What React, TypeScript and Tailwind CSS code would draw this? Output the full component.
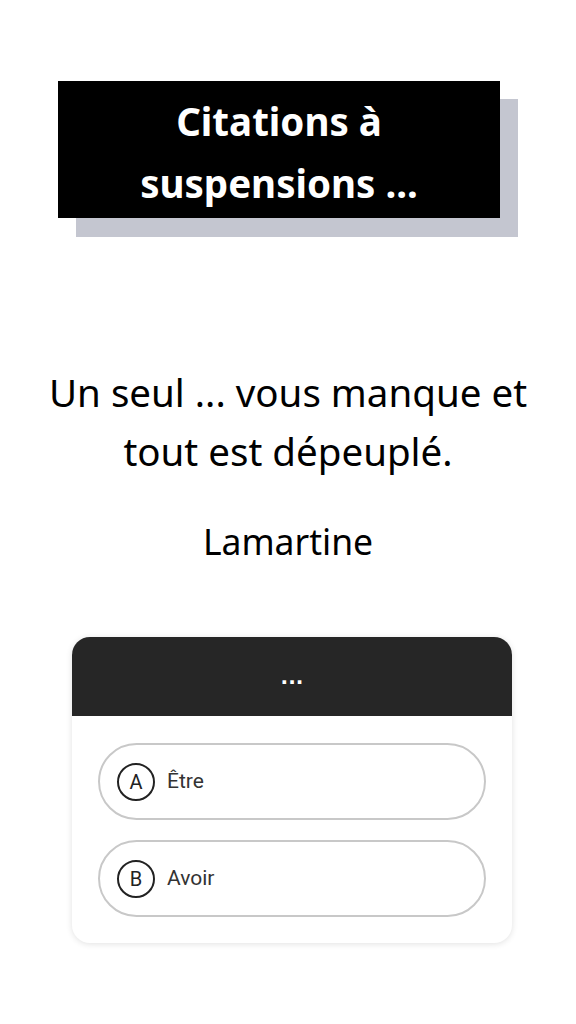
export default function App() {
  const options = [
    { letter: "A", label: "Être" },
    { letter: "B", label: "Avoir" },
  ];

  return (
    <div className="min-h-[1024px] w-[576px] bg-white">
      {/* Title */}
      <div className="pl-[58px] pt-[81px]">
        <div className="relative h-[137px] w-[442px]">
          <div className="absolute left-[18px] top-[18px] h-[138px] w-[442px] bg-[#c4c6d0]" />
          <div className="relative flex h-full w-full items-center justify-center bg-black pt-[4px]">
            <h1
              className="text-center text-[38.5px] font-bold leading-[62px] text-white"
              style={{ fontFamily: '"Noto Sans", sans-serif' }}
            >
              Citations à
              <br />
              suspensions ...
            </h1>
          </div>
        </div>
      </div>

      {/* Quote */}
      <div
        className="mt-[145px] flex flex-col items-center text-black"
        style={{ fontFamily: '"Noto Sans", sans-serif' }}
      >
        <p className="text-center text-[38.5px] leading-[59px]">
          Un seul ... vous manque et
          <br />
          tout est dépeuplé.
        </p>
        <p className="mt-[35px] text-[35.5px] leading-[50px]">Lamartine</p>
      </div>

      {/* Answers card */}
      <div
        className="ml-[72px] mt-[71px] w-[440px] overflow-hidden rounded-[18px] bg-white shadow-[0_1px_6px_rgba(0,0,0,0.12)]"
        style={{ fontFamily: "Roboto, sans-serif" }}
      >
        <div className="flex h-[79px] items-center justify-center bg-[#262626]">
          <span
            className="text-[20px] font-bold leading-none text-white"
            style={{ fontFamily: '"DejaVu Sans", sans-serif' }}
          >
            ...
          </span>
        </div>
        <div className="flex flex-col gap-[20px] px-[26px] pb-[26px] pt-[27px]">
          {options.map((o) => (
            <button
              key={o.letter}
              className="flex h-[77px] items-center gap-[12px] rounded-full border-2 border-[#c8c8c8] bg-white pl-[17px] text-left"
            >
              <span className="flex h-[38px] w-[38px] items-center justify-center rounded-full border-2 border-[#222] text-[20px] text-[#222]">
                {o.letter}
              </span>
              <span className="text-[21px] text-[#333]">{o.label}</span>
            </button>
          ))}
        </div>
      </div>
    </div>
  );
}
